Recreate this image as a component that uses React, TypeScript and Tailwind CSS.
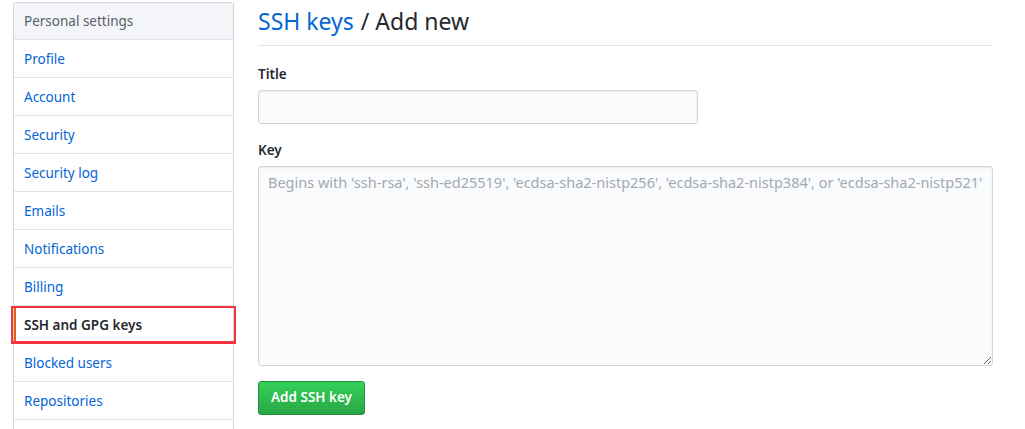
import { Fragment } from 'react'

const items = [
  'Profile',
  'Account',
  'Security',
  'Security log',
  'Emails',
  'Notifications',
  'Billing',
  'SSH and GPG keys',
  'Blocked users',
  'Repositories',
]

const font = { fontFamily: '"Segoe UI", "Noto Sans", "Liberation Sans", sans-serif' }

export default function App() {
  return (
    <div
      className="flex h-[429px] overflow-hidden bg-white pl-[13px] pt-[2px] text-[14px] text-[#24292e]"
      style={font}
    >
      {/* Sidebar */}
      <nav className="w-[221px] shrink-0 self-start rounded-t-[3px] border border-b-0 border-[#d1d5da]">
        <div className="flex h-[37px] items-center border-b border-[#e1e4e8] bg-[#f3f5f8] px-[10px] pt-[1px] text-[13.5px] text-[#586069]">
          Personal settings
        </div>
        {items.map((item) => {
          const selected = item === 'SSH and GPG keys'
          return (
            <Fragment key={item}>
              {selected ? (
                <div className="relative -mx-[3px] flex h-[38px] items-center border-2 border-b-[3px] border-[#f5333f] pl-[11px] pt-[1px] text-[13.5px] font-semibold text-[#24292e]">
                  <span className="absolute left-[1px] top-0 h-full w-[2px] bg-[#e36209]" />
                  {item}
                </div>
              ) : (
                <div className="flex h-[38px] items-center border-b border-[#e1e4e8] px-[10px] pt-[1px] text-[13.5px] text-[#0366d6]">
                  {item}
                </div>
              )}
            </Fragment>
          )
        })}
        <div className="h-[12px]" />
      </nav>

      {/* Main */}
      <main className="ml-[24px] w-[734px] shrink-0">
        <div className="flex h-[44px] items-center border-b border-[#e1e4e8] pb-[4px] text-[23px] font-normal">
          <span className="text-[#0366d6]">SSH keys</span>
          <span className="ml-[7px]">/ Add new</span>
        </div>

        <label className="mt-[18px] block text-[13.5px] font-semibold">Title</label>
        <input
          className="mt-[6px] block h-[34px] w-[440px] rounded-[3px] border border-[#d1d5da] bg-[#fafbfc] shadow-[inset_0_1px_2px_rgba(27,31,35,0.075)] outline-none"
          type="text"
        />

        <label className="mt-[16px] block text-[13.5px] font-semibold">Key</label>
        <textarea
          className="mt-[5px] block h-[200px] w-[735px] resize-y rounded-[3px] border border-[#d1d5da] bg-[#fafbfc] px-[9px] pb-[7px] pt-[5px] text-[14.5px] leading-[20px] shadow-[inset_0_1px_2px_rgba(27,31,35,0.075)] outline-none placeholder:text-[#a3aab1]"
          placeholder="Begins with 'ssh-rsa', 'ssh-ed25519', 'ecdsa-sha2-nistp256', 'ecdsa-sha2-nistp384', or 'ecdsa-sha2-nistp521'"
        />

        <button className="mt-[15px] flex h-[34px] items-center rounded-[3px] border border-[#23903f] bg-gradient-to-b from-[#34d058] to-[#28a745] px-[12px] text-[13.5px] font-semibold text-white">
          Add SSH key
        </button>
      </main>
    </div>
  )
}
